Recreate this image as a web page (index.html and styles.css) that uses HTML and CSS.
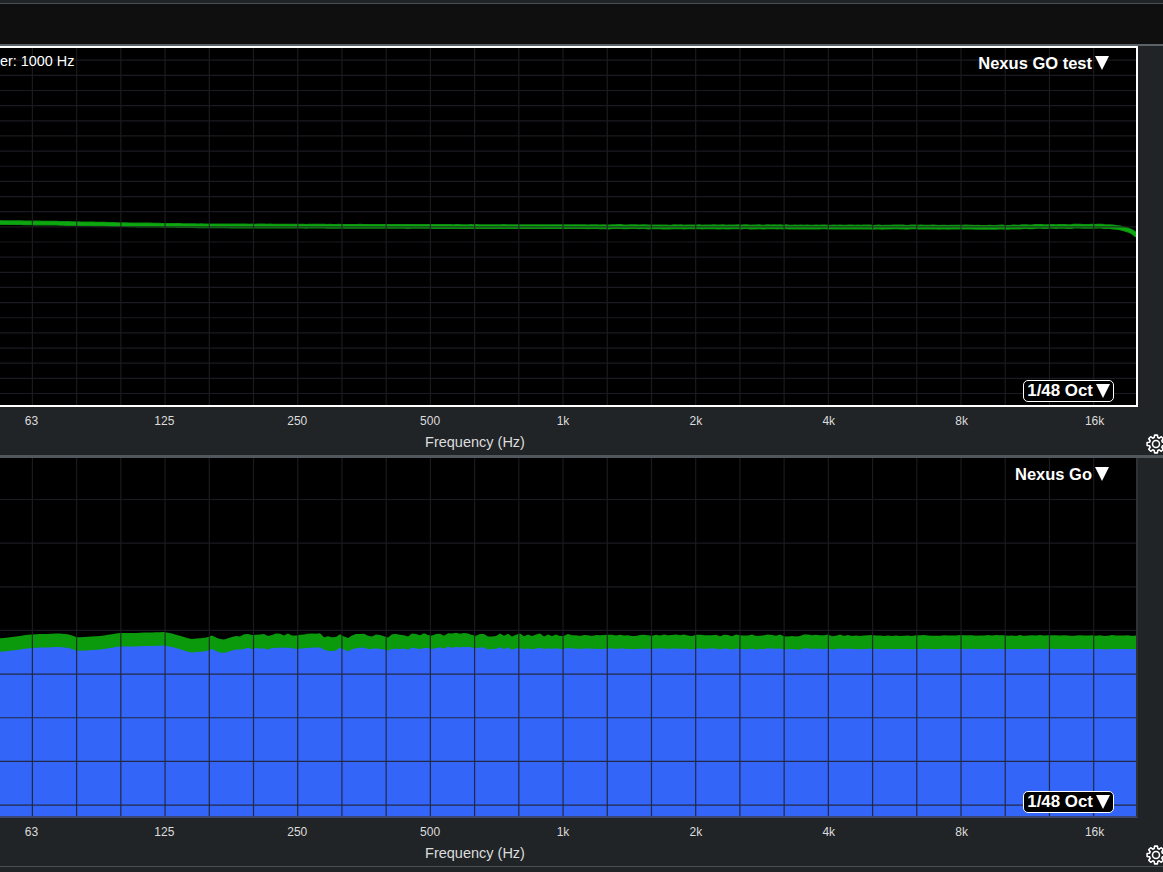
FILE: index.html
```html
<!DOCTYPE html>
<html lang="en">
<head>
  <meta charset="UTF-8">
  <title>Frequency Response</title>
  <link rel="stylesheet" href="styles.css">
</head>
<body>
  <svg class="defs" width="0" height="0">
    <symbol id="gear" viewBox="0 0 24 24">
      <path d="M9.8 4.31 10.31 1.33H13.69L14.2 4.31 15.88 5 18.35 3.26 20.74 5.65 19 8.12 19.69 9.8 22.67 10.31V13.69L19.69 14.2 19 15.88 20.74 18.35 18.35 20.74 15.88 19 14.2 19.69 13.69 22.67H10.31L9.8 19.69 8.12 19 5.65 20.74 3.26 18.35 5 15.88 4.31 14.2 1.33 13.69V10.31L4.31 9.8 5 8.12 3.26 5.65 5.65 3.26 8.12 5Z"/>
      <circle cx="12" cy="12" r="4.2"/>
    </symbol>
  </svg>

  <div class="topbar"></div>

  <section class="panel">
    <div class="plot plot-response">
      <svg class="curve" viewBox="0 48 1136 357" preserveAspectRatio="none">
        <path id="responseOuter" class="line-outer"/>
        <path id="responseInner" class="line-inner"/>
        <path id="responseGrid" class="grid-lines"/>
      </svg>
      <span class="readout">er: 1000 Hz</span>
      <div class="picker picker-top"><span>Nexus GO test</span><i class="arrow"></i></div>
      <div class="picker picker-smooth"><span>1/48 Oct</span><i class="arrow"></i></div>
    </div>
    <div class="axis">
      <div class="ticks">
        <span>63</span><span>125</span><span>250</span><span>500</span><span>1k</span><span>2k</span><span>4k</span><span>8k</span><span>16k</span>
      </div>
      <div class="axis-title">Frequency (Hz)</div>
      <svg class="gear"><use href="#gear"/></svg>
    </div>
  </section>

  <section class="panel">
    <div class="plot plot-level">
      <svg class="curve" viewBox="0 458 1136 358" preserveAspectRatio="none">
        <path id="levelPeak" class="fill-peak"/>
        <path id="levelAvg" class="fill-avg"/>
        <path id="levelGrid" class="grid-lines"/>
      </svg>
      <div class="picker picker-top"><span>Nexus Go</span><i class="arrow"></i></div>
      <div class="picker picker-smooth"><span>1/48 Oct</span><i class="arrow"></i></div>
    </div>
    <div class="axis">
      <div class="ticks">
        <span>63</span><span>125</span><span>250</span><span>500</span><span>1k</span><span>2k</span><span>4k</span><span>8k</span><span>16k</span>
      </div>
      <div class="axis-title">Frequency (Hz)</div>
      <svg class="gear"><use href="#gear"/></svg>
    </div>
  </section>

  <script src="chart.js"></script>
</body>
</html>
```

FILE: styles.css
```css
html, body { height: 100%; }
body {
  margin: 0;
  background: #212427;
  color: #dcdcdc;
  font-family: "Liberation Sans", Arial, sans-serif;
  overflow: hidden;
}
.defs { position: absolute; }

.topbar {
  height: 40px;
  margin-top: 3px;
  background: #0f0f0f;
  border-top: 1px solid #474d53;
  border-bottom: 2px solid #5a6268;
}

.panel { border-bottom: 3px solid #50575d; }
.panel:last-of-type { border-bottom-width: 1px; border-bottom-color: #484e54; }

.plot {
  position: relative;
  width: 1138px;
  box-sizing: border-box;
  background: #000;
  overflow: hidden;
}
.plot-response {
  height: 361px;
  border-top: 2px solid #fff;
  border-right: 2px solid #fff;
  border-bottom: 2px solid #fff;
}
.plot-level {
  height: 360px;
  border-right: 2px solid #2e3236;
  border-bottom: 2px solid #3c4872;
}

.curve {
  position: absolute;
  left: 0;
  top: 0;
  width: 100%;
  height: 100%;
}
.line-outer { fill: none; stroke: #0a900d; stroke-width: 4.8; stroke-linejoin: round; }
.line-inner { fill: none; stroke: #0da810; stroke-width: 3; stroke-linejoin: round; }
.fill-peak { fill: #0a9a0c; }
.fill-avg { fill: #3366f8; }
.grid-lines { fill: none; stroke: rgba(30,30,38,.85); stroke-width: 1.2; }

.readout {
  position: absolute;
  left: 0;
  top: 4px;
  color: #fff;
  font-size: 14.4px;
  line-height: 18px;
}

.picker {
  position: absolute;
  display: flex;
  align-items: center;
  color: #fff;
  font-size: 16.5px;
  font-weight: bold;
  line-height: 20px;
}
.picker-top { right: 27px; top: 5px; }
.plot-level .picker-top { top: 6px; }
.picker-smooth {
  right: 22px;
  bottom: 3px;
  height: 22px;
  box-sizing: border-box;
  padding: 0 3px 0 3px;
  background: #000;
  border: 1.5px solid #fff;
  border-radius: 5px;
  font-size: 16.9px;
}
.arrow {
  width: 0;
  height: 0;
  margin-left: 3px;
  border-left: 7px solid transparent;
  border-right: 7px solid transparent;
  border-top: 14px solid #fff;
}

.axis {
  position: relative;
  height: 48px;
  box-sizing: border-box;
  padding-top: 7px;
}
.ticks {
  display: grid;
  grid-template-columns: repeat(9, 132.9px);
  margin-left: -35px;
  font-size: 12px;
  line-height: 14px;
  text-align: center;
}
.axis-title {
  width: 950px;
  margin-top: 5px;
  font-size: 14.5px;
  line-height: 18px;
  text-align: center;
}
.gear {
  position: absolute;
  left: 1146px;
  top: 27px;
  width: 20px;
  height: 20px;
  fill: none;
  stroke: #fff;
  stroke-width: 1.9;
  stroke-linejoin: round;
}
```

FILE: chart.js
```js
// measured curve points, [x, y] in page pixels
const responsePts = [[0,222.5],[60,223.3],[130,224.8],[200,225.8],[300,226.2],[500,226.6],[800,227],[1000,227.2],[1050,226.4],[1100,226.4],[1115,227.2],[1125,229],[1132,231.8],[1137,235.5]];
const peakPts = [[0,638.3],[33,634.3],[60,633.5],[70,634.5],[77,637.5],[100,636],[118,633.2],[140,632.8],[165,632],[178,635],[190,639],[205,638],[212,635.5],[222,640],[235,636],[255,635],[275,635],[290,634],[298,636.5],[318,633.5],[330,638],[342,634],[346,637],[360,634.5],[386,636],[430,634.5],[470,633.5],[480,635],[560,635],[700,635.3],[860,635.5],[1137,635.5]];

let seed = 41;
function rand() {
  seed = (seed * 16807) % 2147483647;
  return seed / 2147483647 - 0.5;
}

function valueAt(pts, x) {
  for (let i = 1; i < pts.length; i++) {
    if (x <= pts[i][0]) {
      const t = (x - pts[i - 1][0]) / (pts[i][0] - pts[i - 1][0]);
      return pts[i - 1][1] + (pts[i][1] - pts[i - 1][1]) * t;
    }
  }
  return pts[pts.length - 1][1];
}

function jitterAmount(x) {
  if (x < 240) return 0.3;
  if (x < 560) return 3.2;
  if (x < 860) return 2;
  return 1;
}

function toPath(points) {
  return 'M' + points.map(p => p[0].toFixed(1) + ' ' + p[1].toFixed(1)).join('L');
}

function gridPath(top, bottom, firstY, stepY) {
  let d = '';
  for (let x = 32.4; x < 1137; x += 44.22) {
    d += `M${x.toFixed(2)} ${top}V${bottom}`;
  }
  for (let y = firstY; y < bottom; y += stepY) {
    d += `M0 ${y.toFixed(2)}H1137`;
  }
  return d;
}

const peakEdge = [];
const avgEdge = [];
for (let x = 0; x <= 1140; x += 4) {
  const base = valueAt(peakPts, x);
  const n = rand() * jitterAmount(x);
  peakEdge.push([x, base + n]);
  avgEdge.push([x, base + 13.5 + n * 0.5 + rand() * jitterAmount(x) * 0.3]);
}
const close = 'L1140 816L0 816Z';
document.getElementById('levelPeak').setAttribute('d', toPath(peakEdge) + close);
document.getElementById('levelAvg').setAttribute('d', toPath(avgEdge) + close);
document.getElementById('levelGrid').setAttribute('d', gridPath(458, 816, 499.5, 43.65));

const line = [];
for (let x = 0; x <= 1137; x += 3) {
  line.push([x, valueAt(responsePts, x) + rand() * (x > 600 ? 0.5 : 0.15)]);
}
document.getElementById('responseOuter').setAttribute('d', toPath(line));
document.getElementById('responseInner').setAttribute('d', toPath(line));
document.getElementById('responseGrid').setAttribute('d', gridPath(48, 405, 60.2, 15.15));
```
